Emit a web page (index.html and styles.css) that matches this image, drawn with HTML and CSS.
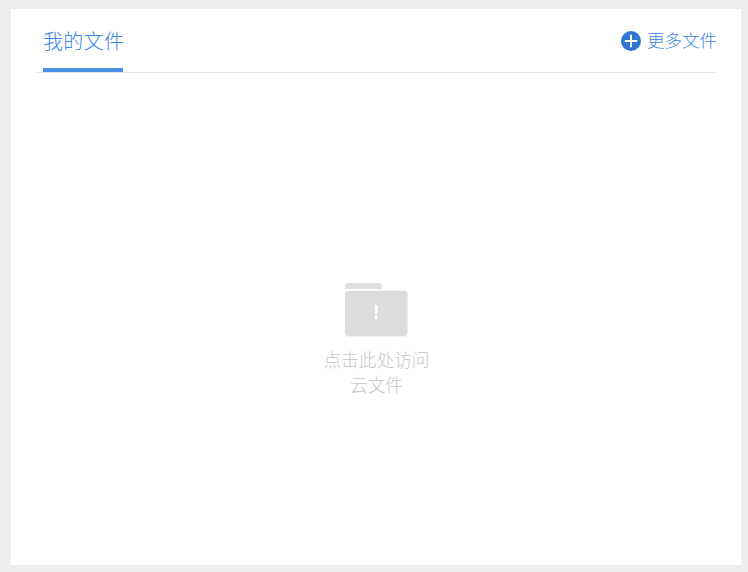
FILE: index.html
```html
<!DOCTYPE html>
<html lang="zh-CN">
<head>
<meta charset="utf-8">
<title>我的文件</title>
<link rel="stylesheet" href="styles.css">
</head>
<body>
<main class="panel">
  <header class="tabs">
    <div class="tab">我的文件</div>
    <a class="more">
      <svg class="more-icon" width="20" height="20" viewBox="0 0 20 20"><circle cx="10" cy="10" r="10" fill="#2f77d0"/><path d="M10 3.800v12.400M3.800 10h12.400" stroke="#fff" stroke-width="2" fill="none"/></svg>
      <span>更多文件</span>
    </a>
  </header>
  <section class="empty">
    <svg class="folder" width="64" height="56" viewBox="0 0 64 56">
      <path d="M1 7V4.500A3.500 3.500 0 0 1 4.500 1h29.500A4 4 0 0 1 38 5v2z" fill="#dfdfdf"/>
      <rect x="1" y="8.700" width="62.500" height="46" rx="4" fill="#f0f0f0"/>
      <rect x="1" y="8.700" width="62.500" height="45.300" rx="4" fill="#dcdcdc"/>
      <path d="M30.700 23h3.100l-.5 9.500h-2.100z" fill="#fff"/><rect x="30.800" y="34" width="2.900" height="3.500" rx="1" fill="#fff"/>
    </svg>
    <p class="empty-text">点击此处访问<br>云文件</p>
  </section>
</main>
</body>
</html>
```
FILE: styles.css
```css
html, body { margin: 0; height: 100%; }
body {
  background: #ededed;
  font-family: "Noto Sans CJK SC", "Noto Sans", sans-serif;
  font-weight: 300;
  box-sizing: border-box;
  padding: 9px 7px 7px 11px;
}
.panel {
  height: 100%;
  background: #fff;
  display: flex;
  flex-direction: column;
}
.tabs {
  height: 63px;
  margin: 0 25px;
  padding-left: 7px;
  border-bottom: 1px solid #e4e4e4;
  display: flex;
  justify-content: space-between;
  align-items: stretch;
  font-size: 20px;
  color: #3a87e4;
}
.tab {
  width: 80px;
  line-height: 64px;
  height: 59px;
  border-bottom: 4px solid #4a90e2;
  white-space: nowrap;
  letter-spacing: 0.3px;
}
.more {
  display: flex;
  align-items: center;
  gap: 6px;
  height: 61px;
  margin-right: -1px;
  font-size: 17.5px;
  color: #3a87e4;
}
.more-icon { display: block; margin-top: 2px; }
.empty {
  flex: 1;
  display: flex;
  flex-direction: column;
  align-items: center;
  padding-top: 209px;
}
.folder { display: block; }
.empty-text {
  margin: 9px 0 0;
  padding-left: 1px;
  text-align: center;
  font-size: 17.700px;
  line-height: 25px;
  color: #c6c6c6;
}
```
